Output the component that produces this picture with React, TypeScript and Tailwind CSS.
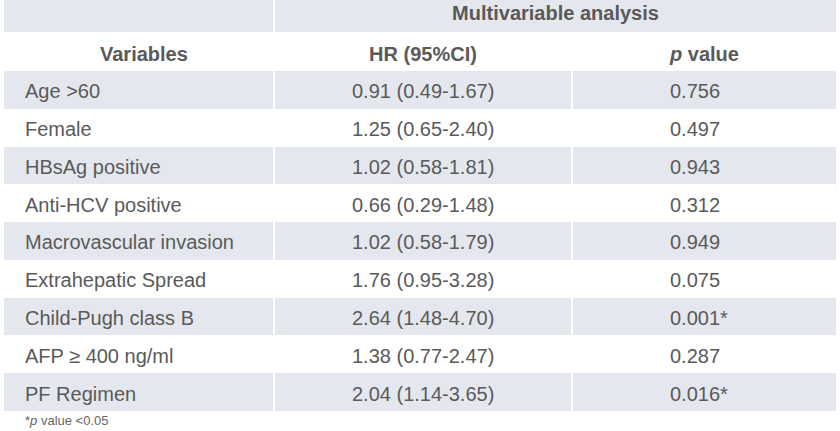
import React from "react";

const rows: [string, string, string][] = [
  ["Age >60", "0.91 (0.49-1.67)", "0.756"],
  ["Female", "1.25 (0.65-2.40)", "0.497"],
  ["HBsAg positive", "1.02 (0.58-1.81)", "0.943"],
  ["Anti-HCV positive", "0.66 (0.29-1.48)", "0.312"],
  ["Macrovascular invasion", "1.02 (0.58-1.79)", "0.949"],
  ["Extrahepatic Spread", "1.76 (0.95-3.28)", "0.075"],
  ["Child-Pugh class B", "2.64 (1.48-4.70)", "0.001*"],
  ["AFP \u2265 400 ng/ml", "1.38 (0.77-2.47)", "0.287"],
  ["PF Regimen", "2.04 (1.14-3.65)", "0.016*"],
];

export default function App() {
  return (
    <div
      className="w-[840px] h-[431px] bg-white text-[#5a5a5a] overflow-hidden"
      style={{ fontFamily: '"Liberation Sans", Arial, sans-serif' }}
    >
      <div className="ml-[4px] w-[832px] grid grid-cols-[269px_296px_263px] gap-x-[2px]">
        {/* header row 1 */}
        <div className="h-[32px] bg-[#e4e8ee]" />
        <div className="col-span-2 h-[32px] bg-[#e4e8ee] flex items-center justify-center pb-[6px] text-[20px] font-bold leading-none">
          Multivariable analysis
        </div>
        {/* header row 2 */}
        <div className="h-[39px] flex items-center pl-[96px] pt-[4px] text-[20px] font-bold leading-none">
          Variables
        </div>
        <div className="h-[39px] flex items-center justify-center pt-[4px] text-[20px] font-bold leading-none">
          HR (95%CI)
        </div>
        <div className="h-[39px] flex items-center pl-[97px] pt-[4px] text-[20px] font-bold leading-none">
          <span className="italic">p</span>&nbsp;value
        </div>
        {rows.map((r, i) => {
          const bg = i % 2 === 0 ? "bg-[#e4e8ee]" : "bg-white";
          return (
            <React.Fragment key={i}>
              <div className={`h-[37.78px] flex items-center pl-[21px] pt-[3px] text-[20px] leading-none ${bg}`}>
                {r[0]}
              </div>
              <div className={`h-[37.78px] flex items-center pl-[77px] pt-[3px] text-[20px] leading-none ${bg}`}>
                {r[1]}
              </div>
              <div className={`h-[37.78px] flex items-center pl-[97px] pt-[3px] text-[20px] leading-none ${bg}`}>
                {r[2]}
              </div>
            </React.Fragment>
          );
        })}
      </div>
      <div className="h-[20px] flex items-center pl-[25px] text-[13px] leading-none text-[#666666]">
        *<span className="italic">p</span>&nbsp;value &lt;0.05
      </div>
    </div>
  );
}
